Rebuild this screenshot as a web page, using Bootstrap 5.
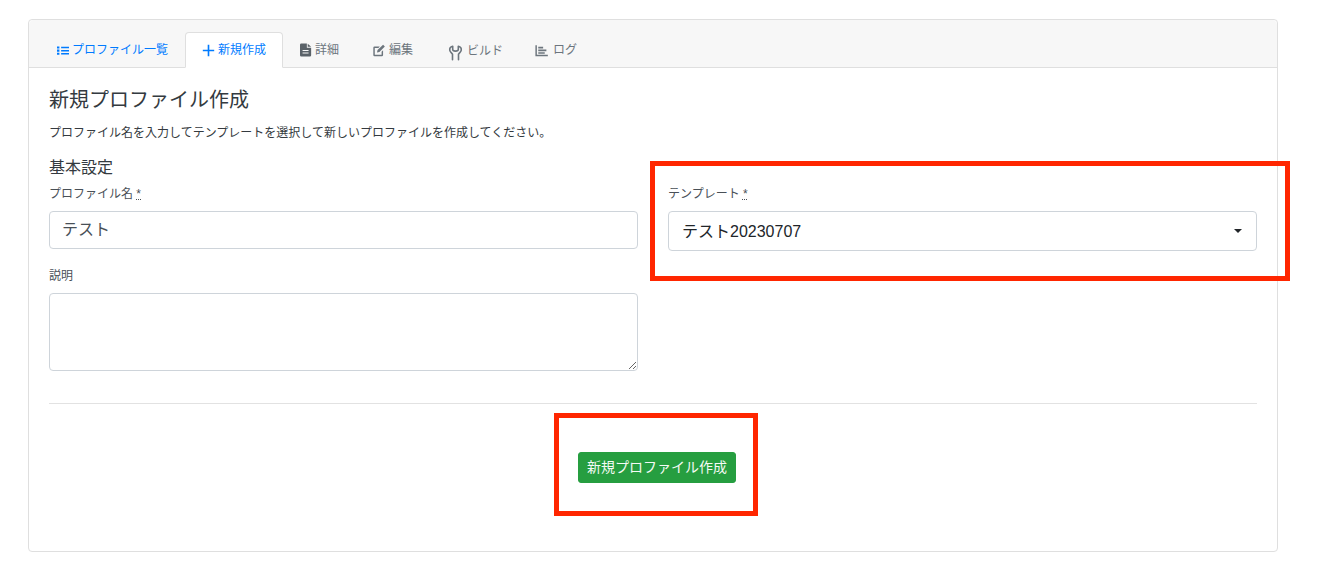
<!DOCTYPE html>
<html lang="ja">
<head>
<meta charset="utf-8">
<title>新規プロファイル作成</title>
<link href="https://cdn.jsdelivr.net/npm/bootstrap@5.3.0/dist/css/bootstrap.min.css" rel="stylesheet">
<style>
body { font-family: "Liberation Sans", "Noto Sans CJK JP", sans-serif; background: #fff; color: #212529; position: relative; height: 582px; overflow: hidden; }
.page-wrap { padding: 19px 46px 0 28px; }
.main-card { height: 533px; border-color: #dfdfdf; border-radius: 4px; }
.main-card .card-header { background: #f7f7f7; padding: 12px 12px 0 11px; border-bottom-color: #dfdfdf; height: 48px; }
.main-card .nav-tabs { margin: 0; border-bottom: 0; }
.main-card .nav-link { font-size: 12px; line-height: 18px; padding: 8px 16px; color: #6c757d; display: flex; align-items: center; gap: 3px; border-radius: 4px 4px 0 0; }
.main-card .nav-link.to-list { color: #007bff; }
.main-card .nav-link.active { color: #007bff; background: #fff; border-color: #dfdfdf #dfdfdf #fff; }
.nav-ico { width: 12px; height: 13px; fill: currentColor; flex: none; }
.ico-wide { width: 13px; }
.ico-file { height: 14px; color: #5a6268; }
.ico-edit { width: 14px; margin-left: -1px; }
.ico-tool { width: 17px; height: 16px; margin-top: 4px; }
.ico-chart { width: 13px; margin-left: -2px; margin-right: 2px; }
.main-card .card-body { padding: 20px; }
.form-title { font-size: 20px; line-height: 24px; font-weight: 400; margin: 0 0 12px; color: #343a40; }
.form-lead { font-size: 12px; line-height: 18px; margin: 0 0 16px; color: #343a40; }
.section-name { font-size: 16px; line-height: 19px; font-weight: 400; margin: 0 0 8px; color: #343a40; }
.form-cols { --bs-gutter-x: 30px; }
.field-label { font-size: 12px; line-height: 18px; margin: 0 0 8px; display: block; color: #495057; }
.field-label abbr { text-decoration: underline dotted; }
.left-field .form-control, .right-field .form-select { border-color: #ced4da; border-radius: 4px; font-size: 16px; padding: 6px 12px; color: #495057; }
.left-field .form-control.name-input { height: 38px; padding-top: 4px; padding-bottom: 8px; }
.right-field .form-select { height: 40px; padding: 7px 36px 5px 13px; color: #212529; background-size: 16px 12px; background-position: right 10px center; background-image: url("data:image/svg+xml,%3csvg xmlns='http://www.w3.org/2000/svg' viewBox='0 0 16 12'%3e%3cpath fill='%23212529' d='M4 4h8L8 8z'/%3e%3c/svg%3e"); }
.name-group { margin-bottom: 18px; }
.left-field textarea.form-control { height: 78px; }
.right-field { padding-top: 27px; }
.form-rule { margin: 32px 0 48px; border-color: #8a8a8a; opacity: .25; }
.submit-row { padding-left: 8px; }
.submit-green { font-size: 14px; line-height: 21px; padding: 4px 8px; background: #269e40; border-color: #269e40; border-radius: 3px; color: #f4faf5; }
.red-mark { position: absolute; border: 5px solid #ff2600; pointer-events: none; }
.mark-one { left: 650px; top: 161px; width: 640px; height: 120px; }
.mark-two { left: 554px; top: 413px; width: 204px; height: 103px; }
</style>
</head>
<body>
<div class="page-wrap">
  <div class="card main-card">
    <div class="card-header">
      <ul class="nav nav-tabs">
        <li class="nav-item"><a class="nav-link to-list" href="#">
          <svg class="nav-ico" viewBox="0 0 16 16"><path d="M0 2.500h3.200v2.800H0zM0 6.800h3.200v2.800H0zM0 11h3.200v2.800H0zM5.500 3h10.500v2H5.500zM5.500 7.200h10.500v2H5.500zM5.500 11.400h10.500v2H5.500z"/></svg>プロファイル一覧</a></li>
        <li class="nav-item"><a class="nav-link active" href="#">
          <svg class="nav-ico ico-wide" viewBox="0 0 16 16"><path d="M7 1h2v6h6v2H9v6H7V9H1V7h6z"/></svg>新規作成</a></li>
        <li class="nav-item"><a class="nav-link" href="#">
          <svg class="nav-ico ico-file" viewBox="0 0 14 16"><path fill-rule="evenodd" d="M1.500 .5H8v4.800h5V14a1.500 1.500 0 0 1-1.500 1.500h-10A1.500 1.500 0 0 1 0 14V2A1.500 1.500 0 0 1 1.500 .5zM9 .8l4 3.500H9zM3 8v1.300h7V8zM3 10.800v1.300h7v-1.300z"/></svg>詳細</a></li>
        <li class="nav-item"><a class="nav-link" href="#">
          <svg class="nav-ico ico-edit" viewBox="0 0 16 16"><path d="M2.500 3H9L7.300 4.800H2.800v8.400h8.400V9.500L13 7.800v5.700a1.500 1.500 0 0 1-1.500 1.500h-9A1.500 1.500 0 0 1 1 13.500v-9A1.500 1.500 0 0 1 2.500 3zM13 .8l2.200 2.200L8.500 9.800 5.500 10.500l.7-3z"/></svg>編集</a></li>
        <li class="nav-item"><a class="nav-link" href="#">
          <svg class="nav-ico ico-tool" viewBox="0 0 16 16"><path fill="none" stroke="currentColor" stroke-width="1.600" stroke-linecap="round" stroke-linejoin="round" d="M5.200 1.300C3 1.800 2 3.600 2.300 5.300 2.600 7 4.400 8 5 9.200v5.600M10.800 1.300c2.200.5 3.200 2.300 2.900 4-.3 1.700-2.100 2.700-2.700 3.900v5.600M5.200 1.300v3.300c0 .8 1.200 1.500 2.800 1.500s2.800-.7 2.800-1.500V1.300"/></svg>ビルド</a></li>
        <li class="nav-item"><a class="nav-link" href="#">
          <svg class="nav-ico ico-chart" viewBox="0 0 16 16"><path d="M.5 1.500h1.800v11.800h13.500v1.800H.5zM4 3.500h6v2H4zM4 6.800h10v2H4zM4 10h8v2H4z"/></svg>ログ</a></li>
      </ul>
    </div>
    <div class="card-body">
      <h2 class="form-title">新規プロファイル作成</h2>
      <p class="form-lead">プロファイル名を入力してテンプレートを選択して新しいプロファイルを作成してください。</p>
      <form>
        <div class="row form-cols">
          <div class="col-6 left-field">
            <h3 class="section-name">基本設定</h3>
            <div class="name-group">
              <label class="field-label" for="pname">プロファイル名 <abbr title="必須">*</abbr></label>
              <input id="pname" class="form-control name-input" type="text" value="テスト">
            </div>
            <div>
              <label class="field-label" for="pdesc">説明</label>
              <textarea id="pdesc" class="form-control"></textarea>
            </div>
          </div>
          <div class="col-6 right-field">
            <label class="field-label" for="ptpl">テンプレート <abbr title="必須">*</abbr></label>
            <select id="ptpl" class="form-select"><option>テスト20230707</option></select>
          </div>
        </div>
        <hr class="form-rule">
        <div class="text-center submit-row">
          <button type="button" class="btn submit-green">新規プロファイル作成</button>
        </div>
      </form>
    </div>
  </div>
</div>
<div class="red-mark mark-one"></div>
<div class="red-mark mark-two"></div>
</body>
</html>
